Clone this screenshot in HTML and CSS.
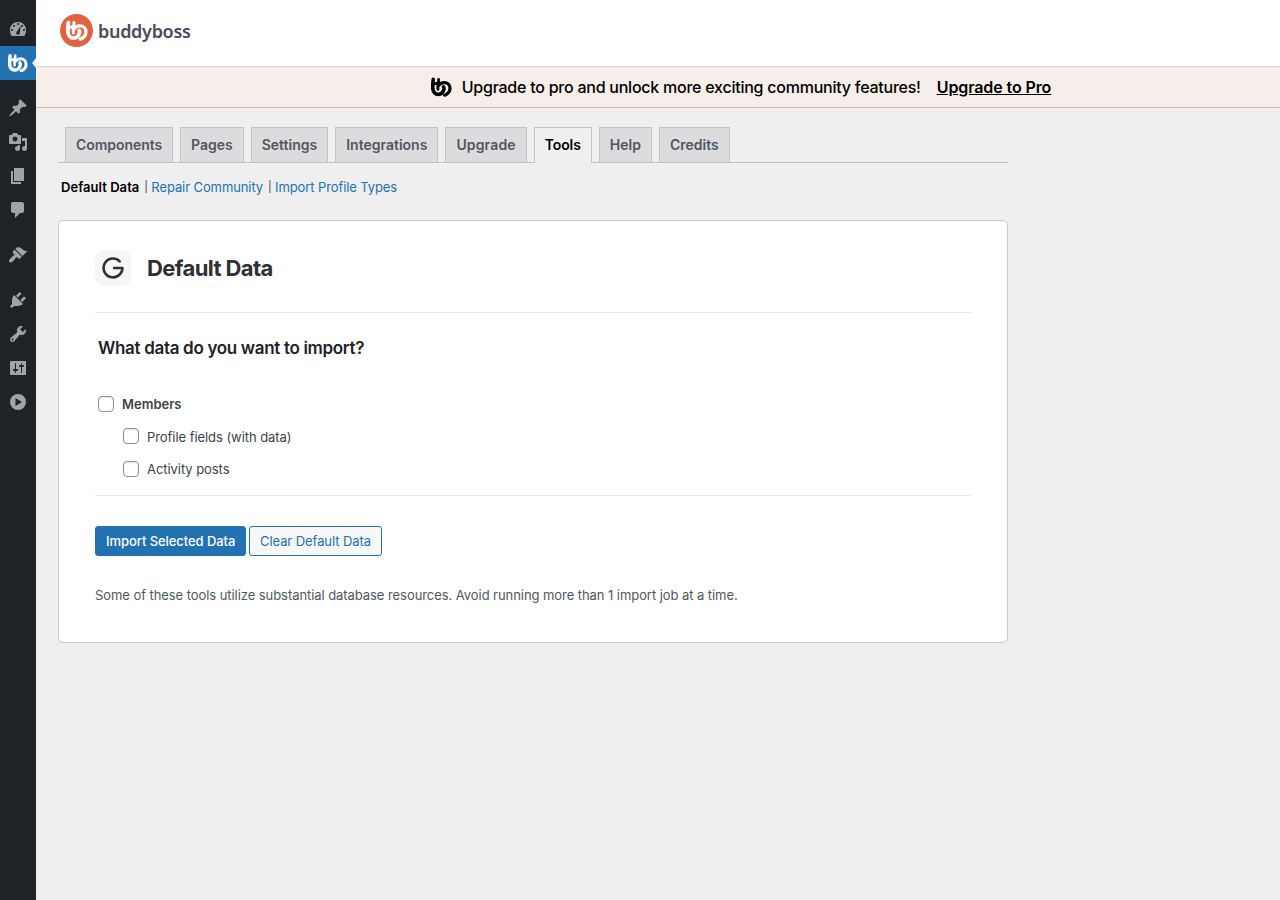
FILE: index.html
```
<!DOCTYPE html>
<html lang="en">
  <head>
    <meta charset="UTF-8" />
    <title>Tools - BuddyBoss</title>
    <link rel="stylesheet" href="styles.css">
  </head>
  <body>
    <svg width="0" height="0" class="defs">
      <symbol id="bb" viewBox="0 0 22 20">
        <g fill="none" stroke="currentColor" stroke-linecap="round" stroke-linejoin="round">
          <path stroke-width="3.6" d="M3.300 2.400C2.700 5 2.600 8 2.800 11.500c.3 3.600 2.500 5.900 5.500 5.900 2.900 0 4.900-2.300 5.700-5.400.2-.9 0-1.600-.5-2.100" />
          <path stroke-width="2.800" d="M3.400 7.200l5-1.300.2-3.600M8.200 6.200c-.5 2-.6 4-.2 6.200" />
          <path stroke-width="3.200" d="M8.800 8.200c1.400-1.700 3.300-2.600 5.300-2.600 3.400 0 5.900 2.400 5.900 5.600 0 3.300-2.300 5.900-5.300 7" />
        </g>
      </symbol>
    </svg>

    <div class="admin">
      <ul class="menu">
        <li><svg viewBox="0 0 20 20"><path fill-rule="evenodd" d="M3.76 17h12.48c1.34-1.63 1.76-3.65 1.76-5.93C18 6.4 14.42 3 10 3S2 6.4 2 11c0 2.28.42 4.37 1.76 6zM10 4c.55 0 1 .45 1 1s-.45 1-1 1-1-.45-1-1 .45-1 1-1zM6 6c.55 0 1 .45 1 1s-.45 1-1 1-1-.45-1-1 .45-1 1-1zm8 0c.55 0 1 .45 1 1s-.45 1-1 1-1-.45-1-1 .45-1 1-1zM12.700 6.500L11.800 14c-.1 1-.9 1.700-1.800 1.700S8.200 15 8.200 14c0-.8.4-1.400 1-1.700zM4 10c.55 0 1 .45 1 1s-.45 1-1 1-1-.45-1-1 .45-1 1-1zm12 0c.55 0 1 .45 1 1s-.45 1-1 1-1-.45-1-1 .45-1 1-1z" /></svg></li>
        <li class="current"><svg viewBox="0 0 22 20"><use href="#bb" /></svg></li>
        <li class="sep"></li>
        <li><svg viewBox="0 0 20 20"><path d="M10.440 3.020l1.820-1.820 6.360 6.350-1.830 1.820c-1.050-.68-2.480-.57-3.410.36l-.75.75c-.92.93-1.040 2.350-.35 3.410l-1.830 1.820-2.410-2.410-2.800 2.790c-.42.42-3.380 2.710-3.800 2.290s1.860-3.390 2.280-3.810l2.790-2.790L4.100 9.360l1.830-1.820c1.050.69 2.480.57 3.400-.36l.75-.75c.93-.92 1.050-2.350.36-3.410z" /></svg></li>
        <li><svg viewBox="0 0 20 20"><path fill-rule="evenodd" d="M13 11V4c0-.55-.45-1-1-1h-1.670L9 1H5L3.670 3H2c-.55 0-1 .45-1 1v7c0 .55.45 1 1 1h10c.55 0 1-.45 1-1zM7 4.500c1.380 0 2.500 1.120 2.500 2.500S8.380 9.500 7 9.500 4.500 8.380 4.500 7 5.620 4.500 7 4.500zM14 6h5v10.500c0 1.380-1.120 2.500-2.500 2.500S14 17.880 14 16.500s1.120-2.500 2.500-2.500c.17 0 .34.02.5.05V9h-3V6zm-4 8.050V13h2v3.500c0 1.380-1.120 2.500-2.500 2.500S7 17.880 7 16.500 8.120 14 9.500 14c.17 0 .34.02.5.05z" /></svg></li>
        <li><svg viewBox="0 0 20 20"><path d="M6 15V2h10v13H6zm-1 1h8v2H3V5h2v11z" /></svg></li>
        <li><svg viewBox="0 0 20 20"><path d="M5 2h9c1.100 0 2 .9 2 2v7c0 1.100-.9 2-2 2h-2l-5 5v-5H5c-1.100 0-2-.9-2-2V4c0-1.100.9-2 2-2z" /></svg></li>
        <li class="sep"></li>
        <li><svg viewBox="0 0 20 20"><path d="M14.480 11.060L7.410 3.990l1.500-1.500c.5-.56 2.300-.47 3.510.32 1.210.8 1.430 1.280 2.910 2.100 1.180.64 2.450 1.260 4.450.85zm-.71.71L6.700 4.700 4.930 6.470c-.39.39-.39 1.020 0 1.410l1.060 1.060c.39.39.39 1.030 0 1.420-.6.6-1.430 1.110-2.210 1.690-.35.26-.7.53-1.010.84C1.430 14.230.4 16.080 1.400 17.070c.99 1 2.840-.03 4.180-1.360.31-.31.58-.66.85-1.020.57-.78 1.080-1.610 1.690-2.210.39-.39 1.020-.39 1.410 0l1.060 1.060c.39.39 1.020.39 1.410 0z" /></svg></li>
        <li class="sep"></li>
        <li><svg viewBox="0 0 20 20"><path d="M13.110 4.360L9.870 7.600 8 5.730l3.240-3.240c.35-.34 1.050-.2 1.560.32.52.51.66 1.210.31 1.550zm-8 1.770l.91-1.120 9.010 9.010-1.190.84c-.71.71-2.630 1.160-3.820 1.160H6.140L4.900 17.260c-.59.59-1.540.59-2.120 0-.59-.58-.59-1.530 0-2.120l1.240-1.240v-3.880c0-1.130.4-3.190 1.090-3.890zm7.260 3.970l3.240-3.240c.34-.35 1.040-.21 1.550.31.52.51.66 1.210.31 1.550l-3.240 3.250z" /></svg></li>
        <li><svg viewBox="0 0 20 20"><path fill-rule="evenodd" d="M16.680 9.770c-1.340 1.340-3.300 1.670-4.950.99l-5.410 6.520c-.99.99-2.590.99-3.580 0s-.99-2.590 0-3.570l6.520-5.420c-.68-1.650-.35-3.610.99-4.950 1.280-1.280 3.120-1.620 4.720-1.060l-2.890 2.890 2.820 2.820 2.860-2.870c.53 1.580.18 3.390-1.080 4.650zM3.810 16.210c.4.39 1.040.39 1.430 0 .4-.4.4-1.040 0-1.430-.39-.4-1.030-.4-1.430 0-.39.39-.39 1.030 0 1.430z" /></svg></li>
        <li><svg viewBox="0 0 20 20"><path fill-rule="evenodd" d="M18 16V4c0-.55-.45-1-1-1H3c-.55 0-1 .45-1 1v12c0 .55.45 1 1 1h14c.55 0 1-.45 1-1zM8 11h1c.55 0 1 .45 1 1s-.45 1-1 1H8v1.500c0 .28-.22.5-.5.5s-.5-.22-.5-.5V13H6c-.55 0-1-.45-1-1s.45-1 1-1h1V5.500c0-.28.22-.5.5-.5s.5.22.5.5V11zm5-2h-1c-.55 0-1-.45-1-1s.45-1 1-1h1V5.500c0-.28.22-.5.5-.5s.5.22.5.5V7h1c.55 0 1 .45 1 1s-.45 1-1 1h-1v5.500c0 .28-.22.5-.5.5s-.5-.22-.5-.5V9z" /></svg></li>
        <li><svg viewBox="0 0 20 20"><path fill-rule="evenodd" d="M10 2a8 8 0 1 0 0 16 8 8 0 0 0 0-16zM7.500 6l6.500 4-6.500 4z" /></svg></li>
      </ul>

      <div class="content">
        <header class="header">
          <span class="logo"><svg viewBox="0 0 22 20"><use href="#bb" /></svg></span>
          <span class="brand">buddyboss</span>
        </header>

        <div class="upgrade">
          <svg viewBox="0 0 22 20"><use href="#bb" /></svg>
          <span class="upgrade-text">Upgrade to pro and unlock more exciting community features!</span>
          <a href="#">Upgrade to Pro</a>
        </div>

        <div class="wrap">
          <nav class="tabs">
            <a href="#">Components</a>
            <a href="#">Pages</a>
            <a href="#">Settings</a>
            <a href="#">Integrations</a>
            <a href="#">Upgrade</a>
            <a href="#" class="active">Tools</a>
            <a href="#">Help</a>
            <a href="#">Credits</a>
          </nav>

          <div class="subnav">
            <a href="#" class="current">Default Data</a><i>|</i><a href="#">Repair Community</a><i>|</i><a href="#">Import Profile Types</a>
          </div>

          <form class="card">
            <h2><span class="card-icon"><svg viewBox="0 0 22 22"><path d="M17.700 4.300A9.400 9.400 0 1 0 20.400 11H12.200" /></svg></span><span>Default Data</span></h2>
            <h3>What data do you want to import?</h3>
            <div class="options">
              <label class="main"><input type="checkbox" />Members</label>
              <label class="sub"><input type="checkbox" /><span>Profile fields (with data)</span></label>
              <label class="sub"><input type="checkbox" /><span>Activity posts</span></label>
            </div>
            <div class="buttons">
              <button type="button" class="primary">Import Selected Data</button>
              <button type="button" class="secondary">Clear Default Data</button>
            </div>
            <p>Some of these tools utilize substantial database resources. Avoid running more than 1 import job at a time.</p>
          </form>
        </div>
      </div>
    </div>
  </body>
</html>
```

FILE: styles.css
```
* {
  box-sizing: border-box;
}
body {
  margin: 0;
  background: #efefef;
  color: #3c434a;
  font-family: Inter, "Liberation Sans", sans-serif;
  font-size: 13px;
}
a {
  color: #2271b1;
  text-decoration: none;
}
.defs {
  display: block;
}
.admin {
  display: flex;
  min-height: 900px;
}

/* side menu */
.menu {
  width: 36px;
  margin: 0;
  padding: 12px 0 0;
  list-style: none;
  background: #1d2327;
  flex: none;
}
.menu li {
  position: relative;
  height: 34px;
  padding: 7px 8px 7px 7.5px;
}
.menu li.sep {
  height: 11px;
  padding: 0;
}
.menu svg {
  display: block;
  width: 20px;
  height: 20px;
  fill: #a0a4a8;
}
.menu .current {
  padding-left: 7px;
  background: #2271b1;
  color: #fff;
}
.menu .current svg {
  width: 21px;
}
.menu .current::after {
  content: "";
  position: absolute;
  right: 0;
  top: 12px;
  border: 5px solid transparent;
  border-left: 0;
  border-right: 4px solid #f0f0f1;
}

.content {
  flex: 1;
}
.header {
  display: flex;
  align-items: center;
  height: 67px;
  padding: 0 24px 5px;
  background: #fff;
  border-bottom: 1px solid #d5d5d8;
}
.logo {
  display: flex;
  align-items: center;
  justify-content: center;
  width: 33px;
  height: 33px;
  border-radius: 50%;
  background: #e1623e;
  color: #fff;
}
.logo svg {
  width: 23px;
  height: 21px;
}
.brand {
  margin-left: 5px;
  font: 600 18px/24px "Noto Sans", sans-serif;
  letter-spacing: -0.3px;
  color: #474c57;
}

.upgrade {
  display: flex;
  align-items: center;
  justify-content: center;
  height: 41px;
  padding-left: 165px;
  background: #f6eee8;
  border-bottom: 1px solid #c3b9b4;
  color: #000;
  font-size: 16px;
  font-weight: 500;
}
.upgrade svg {
  width: 22px;
  height: 20px;
  margin-right: 10px;
}
.upgrade-text {
  letter-spacing: -0.24px;
}
.upgrade a {
  margin-left: 16px;
  color: #000;
  font-weight: 600;
  letter-spacing: -0.1px;
  text-decoration: underline;
}

.wrap {
  width: 950px;
  margin: 19px 0 0 22px;
}
.tabs {
  display: flex;
  gap: 7px;
  height: 36px;
  padding-left: 7px;
  border-bottom: 1px solid #c3c4c7;
}
.tabs a {
  height: 35px;
  padding: 0 10px;
  border: 1px solid #c3c4c7;
  border-bottom: 0;
  background: #dcdcde;
  color: #50575e;
  font-size: 14px;
  font-weight: 600;
  line-height: 34px;
}
.tabs a:first-child {
  letter-spacing: -0.06px;
}
.tabs a:nth-child(5) {
  letter-spacing: 0.15px;
}
.tabs .active {
  height: 36px;
  background: #efefef;
  color: #000;
  letter-spacing: -0.1px;
}

.subnav {
  display: flex;
  padding: 14px 0 0 3px;
  line-height: 20px;
  letter-spacing: -0.1px;
}
.subnav .current {
  color: #000;
  font-weight: 600;
  letter-spacing: 0.05px;
}
.subnav i {
  width: 3px;
  margin: 0 4px 0 5px;
  font-size: 11px;
  font-style: normal;
}

.card {
  height: 423px;
  margin-top: 23px;
  padding: 29px 36px 0;
  border: 1px solid #c8cace;
  border-radius: 5px;
  background: #fff;
}
.card h2 {
  display: flex;
  align-items: center;
  height: 63px;
  margin: 0;
  padding-bottom: 26px;
  border-bottom: 1px solid #e8e8ea;
  color: #303030;
  font-size: 22px;
  font-weight: 700;
  letter-spacing: -0.6px;
}
.card-icon {
  display: flex;
  align-items: center;
  justify-content: center;
  width: 36px;
  height: 36px;
  margin-right: 16px;
  border-radius: 9px;
  background: #f6f6f7;
}
.card-icon svg {
  width: 22px;
  height: 22px;
  fill: none;
  stroke: #303030;
  stroke-width: 2.6;
  stroke-linejoin: round;
  stroke-linecap: round;
}
.card h3 {
  margin: 0;
  padding: 23px 0 0 3px;
  color: #1d2327;
  font-size: 17px;
  font-weight: 600;
  line-height: 24px;
  letter-spacing: -0.32px;
}
.options {
  height: 136px;
  padding: 36px 3px 0;
  border-bottom: 1px solid #ececee;
}
.options label {
  display: flex;
  height: 32.4px;
  line-height: 17px;
}
.options .main {
  font-weight: 600;
}
.options .sub {
  padding-left: 25px;
  letter-spacing: -0.06px;
}
.options .sub span {
  padding-top: 0.5px;
}
.options input {
  appearance: none;
  width: 16px;
  height: 16px;
  margin: 0 8px 0 0;
  border: 1px solid #8c8f94;
  border-radius: 4px;
  background: #fff;
  box-shadow: inset 0 1px 2px rgba(0, 0, 0, 0.1);
}
.buttons {
  display: flex;
  gap: 3px;
  margin-top: 30px;
}
.buttons button {
  height: 30px;
  padding: 0 10px;
  border: 1px solid #2271b1;
  border-radius: 3px;
  font: 13px Inter, sans-serif;
  letter-spacing: -0.07px;
  white-space: nowrap;
}
.buttons .primary {
  width: 151px;
  background: #2271b1;
  color: #fff;
  font-weight: 500;
}
.buttons .secondary {
  width: 133px;
  background: #f6f7f7;
  color: #2271b1;
}
.card p {
  margin: 29px 0 0;
  color: #50575e;
  line-height: 20px;
  letter-spacing: -0.065px;
}
```
